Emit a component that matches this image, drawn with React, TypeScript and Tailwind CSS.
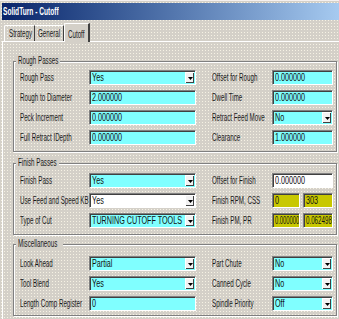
import React from 'react';

type F = { v: string; c?: string; dd?: boolean; w?: string; s?: string };
type Row = { a: string; fa: F; b: string; fb: F | F[] };

const rough: Row[] = [
  { a: 'Rough Pass', fa: { v: 'Yes', dd: true }, b: 'Offset for Rough', fb: { v: '0.000000' } },
  { a: 'Rough to Diameter', fa: { v: '2.000000' }, b: 'Dwell Time', fb: { v: '0.000000' } },
  { a: 'Peck Increment', fa: { v: '0.000000' }, b: 'Retract Feed Move', fb: { v: 'No', dd: true } },
  { a: 'Full Retract IDepth', fa: { v: '0.000000' }, b: 'Clearance', fb: { v: '1.000000' } },
];

const finish: Row[] = [
  { a: 'Finish Pass', fa: { v: 'Yes', dd: true }, b: 'Offset for Finish', fb: { v: '0.000000', c: 'bg-white' } },
  {
    a: 'Use Feed and Speed KB',
    fa: { v: 'Yes', dd: true, c: 'bg-white' },
    b: 'Finish RPM, CSS',
    fb: [
      { v: '0', c: 'bg-[#c8c800]', w: 'w-[28px]' },
      { v: '303', c: 'bg-[#c8c800]', w: 'w-[30px]' },
    ],
  },
  {
    a: 'Type of Cut',
    fa: { v: 'TURNING CUTOFF TOOLS', dd: true },
    b: 'Finish PM, PR',
    fb: [
      { v: '0.000000', c: 'bg-[#c8c800]', w: 'w-[28px]', s: 'scale-x-[0.58]' },
      { v: '0.062498', c: 'bg-[#c8c800]', w: 'w-[30px]', s: 'scale-x-[0.62]' },
    ],
  },
];

const misc: Row[] = [
  { a: 'Look Ahead', fa: { v: 'Partial', dd: true }, b: 'Part Chute', fb: { v: 'No', dd: true } },
  { a: 'Tool Blend', fa: { v: 'Yes', dd: true }, b: 'Canned Cycle', fb: { v: 'No', dd: true } },
  { a: 'Length Comp Register', fa: { v: '0' }, b: 'Spindle Priority', fb: { v: 'Off', dd: true } },
];

// the screenshot is squeezed sideways, so text gets narrowed the same way
function T({ children }: { children: React.ReactNode }) {
  return <span className="inline-block origin-left scale-x-[0.62] whitespace-nowrap">{children}</span>;
}

function Arrow() {
  return (
    <span className="w-[9px] my-[1px] mr-[1px] bg-[#f2f2f2] border-t border-l border-white shadow-[inset_-1px_-1px_0_#404040] flex items-center justify-center">
      <svg width="5" height="3" viewBox="0 0 5 3">
        <path d="M0 0h5L2.5 3z" fill="#000" />
      </svg>
    </span>
  );
}

function Box({ f }: { f: F }) {
  return (
    <div
      className={`h-[15px] flex items-stretch border border-t-[#808080] border-l-[#808080] border-r-white border-b-white shadow-[inset_1px_1px_0_#404040] ${
        f.c ?? 'bg-[#80ffff]'
      } ${f.w ?? 'w-full'}`}
    >
      <span className="flex-1 min-w-0 pl-[2px] leading-[13px] overflow-hidden text-[#111]">
        <span className={`inline-block origin-left whitespace-nowrap ${f.s ?? 'scale-x-[0.72]'}`}>{f.v}</span>
      </span>
      {f.dd && <Arrow />}
    </div>
  );
}

function Group({ title, w, rows, className }: { title: string; w: string; rows: Row[]; className: string }) {
  return (
    <fieldset
      className={`w-[324px] border border-[#808080] shadow-[inset_1px_1px_0_#fff,1px_1px_0_#fff] pl-[6px] pr-[3px] ${className}`}
    >
      <legend className={`-ml-[4px] px-[2px] leading-[12px] bg-[#d4d0c8] overflow-hidden ${w}`}>
        <T>{title}</T>
      </legend>
      <div className="grid grid-cols-[69px_107px_76px_61px] gap-y-[5px] items-center">
        {rows.map((r) => (
          <React.Fragment key={r.a}>
            <span>
              <T>{r.a}</T>
            </span>
            <Box f={r.fa} />
            <span className="pl-[16px]">
              <T>{r.b}</T>
            </span>
            {Array.isArray(r.fb) ? (
              <div className="flex gap-[3px]">
                {r.fb.map((f) => (
                  <Box key={f.v} f={f} />
                ))}
              </div>
            ) : (
              <Box f={r.fb} />
            )}
          </React.Fragment>
        ))}
      </div>
    </fieldset>
  );
}

export default function App() {
  return (
    <div className="w-[339px] h-[319px] overflow-hidden bg-[#d4d0c8] bg-[radial-gradient(circle,#f6f2e4_0.6px,transparent_0.9px)] bg-[length:3px_3px] border-t border-[#f4f0f0] flex flex-col font-['Liberation_Sans',sans-serif] text-[10px] text-[#1a1a1a]">
      {/* title bar */}
      <div className="mt-[2px] ml-[2px] h-[17px] bg-linear-to-r from-[#0a246a] to-[#a6caf0] flex items-center pl-[1px]">
        <span className="inline-block origin-left scale-x-[0.6] whitespace-nowrap text-white font-bold text-[11px]">
          SolidTurn - Cutoff
        </span>
      </div>

      {/* tabs */}
      <div className="h-[21px] flex items-end pl-[4px]">
        <div className="h-[16px] w-[31px] border-t border-l border-white border-r border-r-[#404040] rounded-tl-[2px] flex items-center pl-[4px] overflow-hidden">
          <T>Strategy</T>
        </div>
        <div className="h-[16px] w-[29px] border-t border-white border-r border-r-[#404040] flex items-center pl-[3px] overflow-hidden">
          <T>General</T>
        </div>
        <div className="h-[19px] w-[26px] -mb-[1px] bg-[#d4d0c8] border-t border-l border-white border-r-2 border-r-[#404040] rounded-tl-[2px] flex items-start pt-[3px] pl-[3px] overflow-hidden relative">
          <T>Cutoff</T>
        </div>
      </div>

      {/* tab page */}
      <div className="ml-[2px] w-[343px] flex-1 border-t border-l border-white pt-[13px] pl-[10px] flex flex-col">
        <Group title="Rough Passes" w="w-[44px]" rows={rough} className="pt-[3px] pb-[6px]" />
        <Group title="Finish Passes" w="w-[43px]" rows={finish} className="mt-[5px] pt-[4px] pb-[6px]" />
        <Group title="Miscellaneous" w="w-[47px]" rows={misc} className="mt-[3px] pt-[6px] pb-[4px]" />
      </div>
    </div>
  );
}
